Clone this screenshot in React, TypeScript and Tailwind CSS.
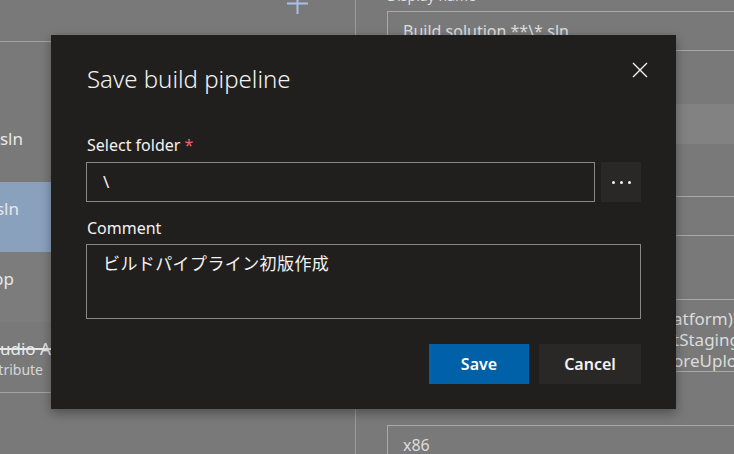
import React from 'react';

const CloseIcon = () => (
  <svg width="16" height="16" viewBox="0 0 16 16" fill="none">
    <path d="M1 1L15 15M15 1L1 15" stroke="#f3f2f1" strokeWidth="1.4" />
  </svg>
);

const PlusIcon = () => (
  <svg width="21" height="21" viewBox="0 0 21 21" fill="none">
    <path d="M10.5 0V21M0 10.5H21" stroke="#a9c0ee" strokeWidth="2" />
  </svg>
);

const TaskRow = ({
  title,
  end,
  className = '',
}: {
  title: string;
  end: string;
  className?: string;
}) => (
  <div className={`h-[70px] shrink-0 pt-[15px] ${className}`}>
    <div className={`flex ${end} justify-end whitespace-nowrap text-[17px] leading-[24px] text-[#e8e8e8]`}>{title}</div>
  </div>
);

const Field = ({ label, gap, children }: { label: string; gap: string; children: React.ReactNode }) => (
  <div className={gap}>
    <div className="h-[20px] text-[14px] leading-[20px] text-[#dedede] whitespace-nowrap">{label}</div>
    <div className="mt-[5px]">{children}</div>
  </div>
);

const ArgLine = ({ hidden, shown }: { hidden: string; shown: string }) => (
  <div className="flex whitespace-nowrap h-[21px] leading-[21px]">
    <span className="flex w-[270px] shrink-0 justify-end">{hidden}</span>
    <span>{shown}</span>
  </div>
);

export default function App() {
  return (
    <div className="relative flex w-[734px] h-[454px] overflow-hidden bg-[#797979] font-['Noto_Sans','Noto_Sans_CJK_JP',sans-serif]">
      {/* Task list */}
      <div className="flex w-[356px] shrink-0 flex-col border-r border-[#9c9c9c]">
        <div className="flex h-[42px] shrink-0 items-start justify-end border-b border-[#a3a3a3] pr-[47px]">
          <div className="-mt-[7px]">
            <PlusIcon />
          </div>
        </div>
        <div className="h-[70px] shrink-0" />
        <TaskRow title="NuGet restore **\*.sln" end="w-[23px]" />
        <TaskRow title="Build solution **\*.sln" end="w-[19px]" className="bg-[#8aa1bd]" />
        <TaskRow title="Build UWP app" end="w-[14px]" className="bg-[#7c7c7c]" />
        <div className="h-[71px] shrink-0 border-b border-[#a3a3a3] pt-[15px]">
          <div className="flex whitespace-nowrap text-[17px] leading-[24px] text-[#e8e8e8]">
            <span className="flex w-0 justify-end line-through decoration-[#e8e8e8] decoration-[1.5px]">Publish to Visual St</span>
            <span className="line-through decoration-[#e8e8e8] decoration-[1.5px]">udio App Center</span>
          </div>
          <div className="flex w-[43px] justify-end whitespace-nowrap text-[14px] leading-[18px] text-[#d6d6d6]">
            App Center Distribute
          </div>
        </div>
      </div>

      {/* Task properties */}
      <div className="flex flex-1 flex-col overflow-hidden pl-[31px] text-[17px] text-[#dcdcdc]">
        <Field label="Display name" gap="-mt-[14px]">
          <div className="flex h-[40px] w-[420px] items-center border border-[#a9a9a9] px-[15px] text-[16px] whitespace-nowrap">
            Build solution **\*.sln
          </div>
        </Field>
        <Field label="Solution" gap="mt-[28px]">
          <div className="h-[40px] w-[420px] bg-[#828282]" />
        </Field>
        <Field label="Visual Studio Version" gap="mt-[27px]">
          <div className="h-[40px] w-[420px] border border-[#a9a9a9]" />
        </Field>
        <Field label="MSBuild Arguments" gap="mt-[38px]">
          <div className="h-[73px] w-[420px] border border-[#a9a9a9] pl-[15px] pt-[8px]">
            <ArgLine hidden={'/p:AppxBundlePlatforms="$(BuildPl'} shown={'atform)"'} />
            <ArgLine hidden={'/p:AppxPackageDir="$(Build.Artifac'} shown={'tStagingDirectory)\\AppxPackages\\\\"'} />
            <ArgLine hidden="/p:AppxBundle=Always /p:UapAppxPackageBuildMode=St" shown="oreUpload" />
          </div>
        </Field>
        <Field label="" gap="mt-[28px]">
          <div className="flex h-[40px] w-[420px] items-center border border-[#a9a9a9] px-[15px] text-[16px]">x86</div>
        </Field>
      </div>

      {/* Save dialog */}
      <div className="absolute left-[51px] top-[35px] flex h-[374px] w-[625px] flex-col bg-[#201f1e] px-[35px] pt-[28px] shadow-[0_4px_10px_rgba(0,0,0,0.35)]">
        <div className="flex h-[32px] items-center justify-between pl-[1px]">
          <h1 className="text-[24px] font-light leading-[32px] text-[#f3f2f1]">Save build pipeline</h1>
          <button className="-mr-[7px] -mt-[18px] flex h-[16px] w-[16px] items-center justify-center">
            <CloseIcon />
          </button>
        </div>

        <label className="mt-[38px] h-[24px] pl-[1px] text-[16px] leading-[24px] text-[#f3f2f1]">
          Select folder <span className="text-[#e8676d]">*</span>
        </label>
        <div className="mt-[5px] flex gap-[6px]">
          <div className="flex h-[40px] flex-1 items-center border border-[#8a8886] px-[16px] text-[17px] text-[#f3f2f1]">
            \
          </div>
          <button className="flex h-[40px] w-[40px] items-center justify-center gap-[5px] bg-[#292827]">
            <span className="h-[3px] w-[3px] rounded-full bg-[#f3f2f1]" />
            <span className="h-[3px] w-[3px] rounded-full bg-[#f3f2f1]" />
            <span className="h-[3px] w-[3px] rounded-full bg-[#f3f2f1]" />
          </button>
        </div>

        <label className="mt-[14px] h-[24px] pl-[1px] text-[16px] leading-[24px] text-[#f3f2f1]">Comment</label>
        <div className="mt-[4px] h-[75px] border border-[#8a8886] px-[16px] pt-[7px] text-[17px] leading-[24px] tracking-[0.4px] text-[#f3f2f1]">
          ビルドパイプライン初版作成
        </div>

        <div className="mt-[25px] flex justify-end gap-[10px]">
          <button className="h-[40px] w-[100px] bg-[#0060a8] text-[16px] font-semibold text-white">Save</button>
          <button className="h-[40px] w-[102px] bg-[#292827] text-[16px] font-semibold text-[#f3f2f1]">Cancel</button>
        </div>
      </div>
    </div>
  );
}
